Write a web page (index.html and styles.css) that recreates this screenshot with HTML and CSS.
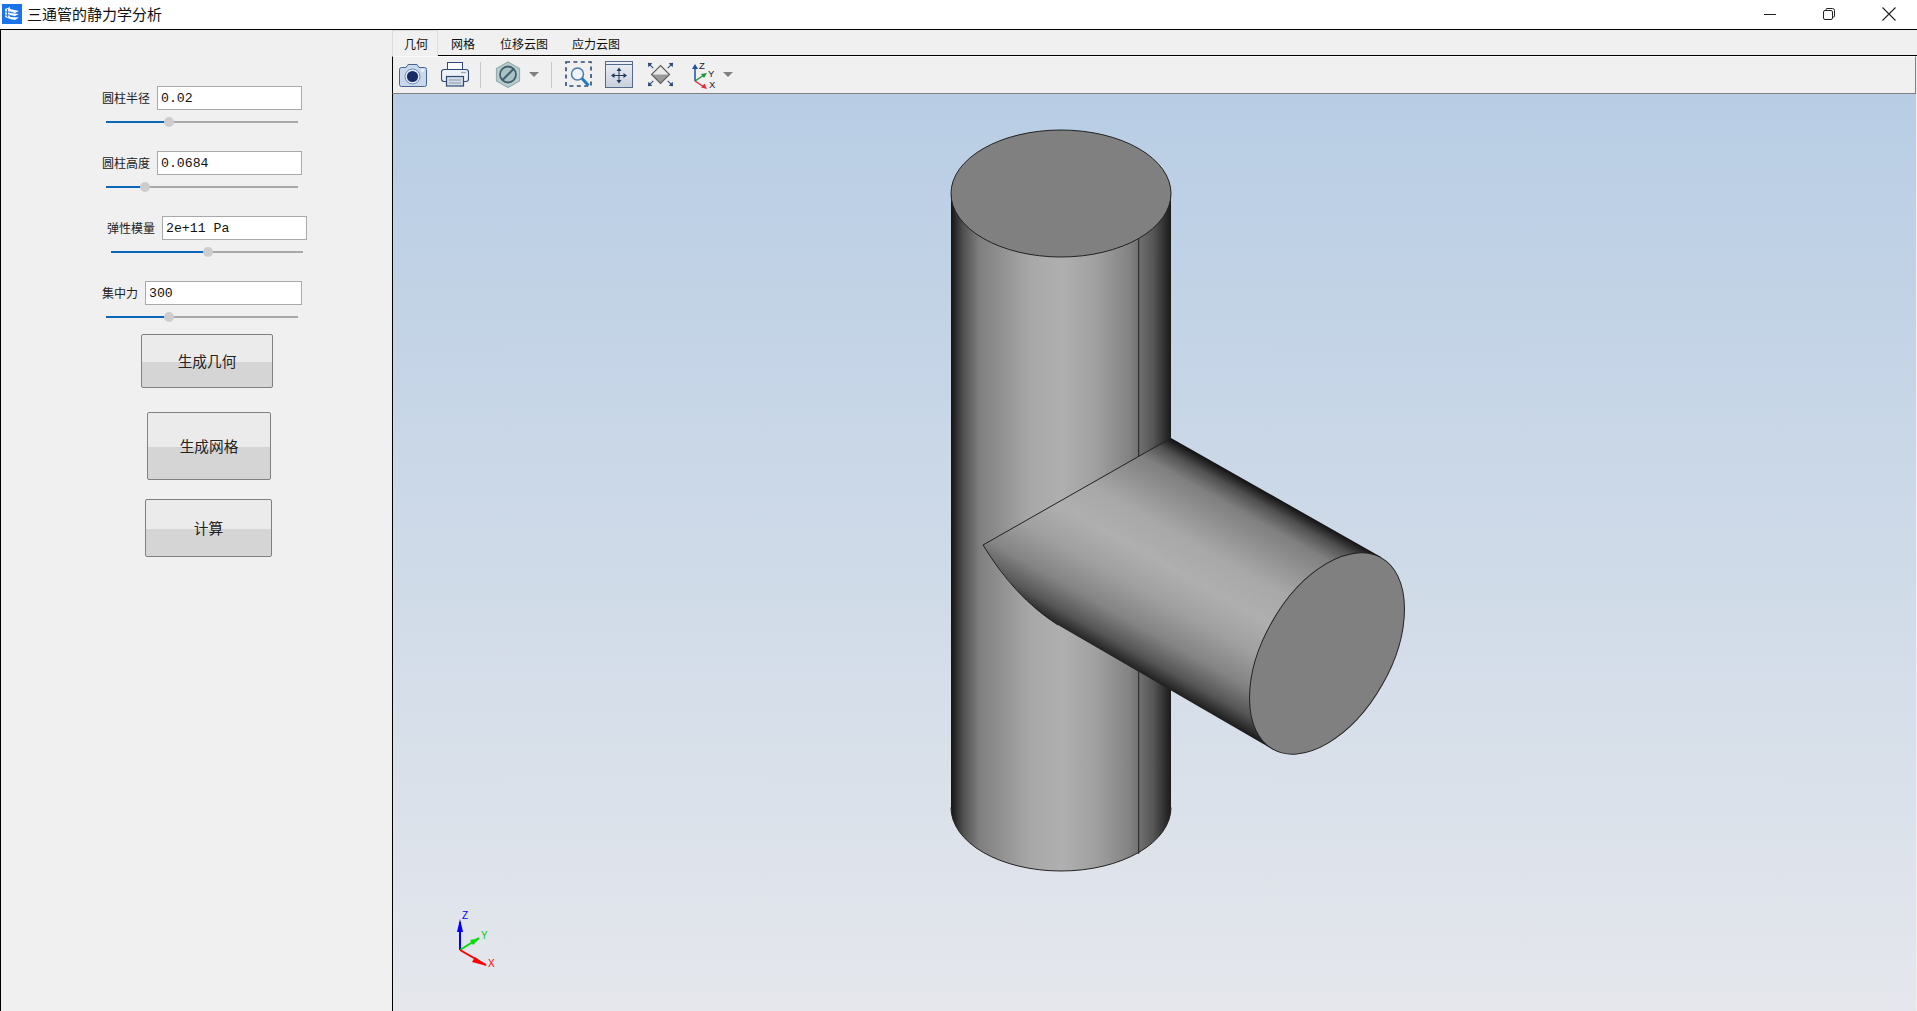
FILE: index.html
```html
<!DOCTYPE html>
<html lang="zh-CN">
<head>
<meta charset="utf-8">
<title>三通管的静力学分析</title>
<link rel="stylesheet" href="styles.css">
</head>
<body>
<div class="app">
  <header class="titlebar">
    <svg class="app-icon" viewBox="0 0 20 20" width="20" height="20">
      <rect width="20" height="20" fill="#1a73e8"/>
      <path d="M3 5 L8 3 V15 L3 13 Z" fill="#fff" opacity=".9"/>
      <path d="M8 5 L17 7 L13 9 L8 7.5 Z M8 9 L17 10 L13 12 L8 11 Z M8 13 L17 13.5 L13 16 L8 15 Z" fill="#fff"/>
      <path d="M3 8 H8 M3 11 H8 M5.5 5 V13" stroke="#1a73e8" stroke-width=".9"/>
    </svg>
    <span class="app-title">三通管的静力学分析</span>
    <div class="win-controls">
      <svg width="12" height="12" viewBox="0 0 12 12"><path d="M0 6.5H12" stroke="#222" stroke-width="1"/></svg>
      <svg width="12" height="12" viewBox="0 0 12 12"><path d="M3 2.5V1.5Q3 .5 4 .5H9.5Q11.5 .5 11.5 2.5V8Q11.5 9 10.5 9H9.5" fill="none" stroke="#222"/><rect x=".5" y="2.5" width="9" height="9" rx="1.5" fill="none" stroke="#222"/></svg>
      <svg width="14" height="14" viewBox="0 0 14 14"><path d="M.5 .5L13.5 13.5M13.5 .5L.5 13.5" stroke="#222" stroke-width="1.1"/></svg>
    </div>
  </header>

  <main class="workspace">
    <aside class="side">
      <section class="field field--a">
        <div class="field-row">
          <label class="field-label">圆柱半径</label>
          <input class="field-input field-input--145" value="0.02">
        </div>
        <div class="slider"><div class="slider-fill" style="width:33%"><span class="slider-thumb"></span></div></div>
      </section>
      <section class="field field--a">
        <div class="field-row">
          <label class="field-label">圆柱高度</label>
          <input class="field-input field-input--145" value="0.0684">
        </div>
        <div class="slider"><div class="slider-fill" style="width:20.5%"><span class="slider-thumb"></span></div></div>
      </section>
      <section class="field field--b">
        <div class="field-row">
          <label class="field-label">弹性模量</label>
          <input class="field-input field-input--145" value="2e+11 Pa">
        </div>
        <div class="slider"><div class="slider-fill" style="width:50.5%"><span class="slider-thumb"></span></div></div>
      </section>
      <section class="field field--a">
        <div class="field-row">
          <label class="field-label">集中力</label>
          <input class="field-input field-input--157" value="300">
        </div>
        <div class="slider"><div class="slider-fill" style="width:33%"><span class="slider-thumb"></span></div></div>
      </section>
      <button class="action action--geo">生成几何</button>
      <button class="action action--mesh">生成网格</button>
      <button class="action action--calc">计算</button>
    </aside>

    <div class="stage">
      <nav class="tabs">
        <span class="tab tab--active">几何</span>
        <span class="tab">网格</span>
        <span class="tab">位移云图</span>
        <span class="tab tab--last">应力云图</span>
      </nav>

      <div class="toolbar">
        <svg class="tool t-camera" width="28" height="24" viewBox="0 0 28 24">
          <path d="M2.5 4.5H7L9 1.5H18L20 4.5H25.5Q27.5 4.5 27.5 6.5V21.5Q27.5 23.5 25.5 23.5H2.5Q.5 23.5 .5 21.5V6.5Q.5 4.5 2.5 4.5Z" fill="#c9d8ec" stroke="#47648f"/>
          <circle cx="13.5" cy="13.5" r="7.5" fill="#e4ecf6" stroke="#6d8ab2"/>
          <circle cx="13.5" cy="13.5" r="5.6" fill="#1a2c66"/>
          <circle cx="23.5" cy="7.5" r="1.2" fill="#fff"/>
        </svg>
        <svg class="tool t-printer" width="28" height="25" viewBox="0 0 28 25">
          <rect x="6.5" y=".5" width="15" height="8" fill="#fff" stroke="#2f4a75"/>
          <rect x=".5" y="7.5" width="27" height="12" rx="2.5" fill="#eef2f7" stroke="#2f4a75" stroke-width="1.2"/>
          <path d="M20 10.5H25" stroke="#9aa9bf" stroke-width="1.4"/>
          <rect x="5.5" y="14.5" width="17" height="9.5" fill="#d3dbe6" stroke="#2f4a75" stroke-width="1.2"/>
          <path d="M8 18H20M8 21H20" stroke="#8b9bb2"/>
        </svg>
        <span class="tool-sep t-sep1"></span>
        <svg class="tool t-hex" width="26" height="27" viewBox="0 0 26 27">
          <path d="M13 1L24.5 7.5V20L13 26.5L1.5 20V7.5Z" fill="#b9cdcd" stroke="#93aeae" stroke-width="1.2"/>
          <circle cx="13" cy="13.5" r="8" fill="#a9c2c6" stroke="#41606c" stroke-width="1.8"/>
          <path d="M7.5 19L18.5 8" stroke="#41606c" stroke-width="2"/>
        </svg>
        <svg class="tool t-arrow1" width="10" height="5" viewBox="0 0 10 5"><path d="M0 0H10L5 5Z" fill="#808080"/></svg>
        <span class="tool-sep t-sep2"></span>
        <svg class="tool t-zoom" width="27" height="27" viewBox="0 0 27 27">
          <rect x="1" y="1" width="25" height="24" fill="none" stroke="#2f4a75" stroke-width="1.6" stroke-dasharray="4 3.4"/>
          <circle cx="12.5" cy="13" r="6" fill="#eef4fa" stroke="#4d7cab" stroke-width="1.5"/>
          <path d="M17 17.5L23.5 24.5" stroke="#1e7bc0" stroke-width="3"/>
        </svg>
        <svg class="tool t-fit" width="28" height="27" viewBox="0 0 28 27">
          <defs><linearGradient id="fitbg" x1="0" y1="0" x2="0" y2="1"><stop offset="0" stop-color="#eef1f5"/><stop offset="1" stop-color="#c8cfdb"/></linearGradient></defs>
          <rect x=".5" y=".5" width="27" height="26" fill="url(#fitbg)" stroke="#54698c"/>
          <path d="M1 3.5H27" stroke="#54698c" stroke-width="1"/>
          <path d="M14 8V21M7.5 14.5H20.5" stroke="#22395f" stroke-width="1"/>
          <path d="M14 6.5L11.5 10H16.5ZM14 22.5L11.5 19H16.5ZM6 14.5L9.5 12V17ZM22 14.5L18.5 12V17Z" fill="#22395f"/>
        </svg>
        <svg class="tool t-diamond" width="27" height="27" viewBox="0 0 30 28">
          <path d="M15 4L25 14H5Z" fill="#e9e9e9"/>
          <path d="M5 14H25L15 24Z" fill="#9a9a9a"/>
          <path d="M15 4L25 14L15 24L5 14Z" fill="none" stroke="#5f5f5f" stroke-width="1.3"/>
          <path d="M1 1L6 1.5L1.5 6Z M29 1L24 1.5L28.5 6Z M1 27L1.5 22L6 26.5Z M29 27L28.5 22L24 26.5Z" fill="#2d4a7a"/>
          <path d="M3 3L7 7M27 3L23 7M3 25L7 21M27 25L23 21" stroke="#2d4a7a" stroke-width="1.2"/>
        </svg>
        <svg class="tool t-axes" width="24" height="28" viewBox="0 0 24 28">
          <path d="M3 20V6" stroke="#1f4fa8" stroke-width="1.5"/>
          <path d="M3 3L0 8H6Z" fill="#1f4fa8"/>
          <path d="M3 20L12 14" stroke="#1c9a3a" stroke-width="1.5"/>
          <path d="M15 12L9 13L12 17Z" fill="#1c9a3a"/>
          <path d="M3 20L12 26" stroke="#e0303a" stroke-width="1.5"/>
          <path d="M15 28L9 26.5L12.5 22.5Z" fill="#e0303a"/>
          <text class="axes-label" x="7" y="8">Z</text>
          <text class="axes-label" x="16" y="16">Y</text>
          <text class="axes-label" x="17" y="27">X</text>
        </svg>
        <svg class="tool t-arrow2" width="10" height="5" viewBox="0 0 10 5"><path d="M0 0H10L5 5Z" fill="#808080"/></svg>
      </div>

      <div class="viewport">
        <svg class="scene" width="1523" height="917" viewBox="393 94 1523 917">
          <defs>
            <linearGradient id="tubeV" gradientUnits="userSpaceOnUse" x1="951" y1="0" x2="1171" y2="0">
              <stop offset="0" stop-color="#141414"/>
              <stop offset=".055" stop-color="#505050"/>
              <stop offset=".13" stop-color="#7f7f7f"/>
              <stop offset=".36" stop-color="#a8a8a8"/>
              <stop offset=".51" stop-color="#afafaf"/>
              <stop offset=".66" stop-color="#a0a0a0"/>
              <stop offset=".81" stop-color="#838383"/>
              <stop offset=".92" stop-color="#555"/>
              <stop offset="1" stop-color="#1a1a1a"/>
            </linearGradient>
            <linearGradient id="tubeB" gradientUnits="userSpaceOnUse" x1="1381" y1="557" x2="1273" y2="749.5">
              <stop offset="0" stop-color="#141414"/>
              <stop offset=".055" stop-color="#505050"/>
              <stop offset=".13" stop-color="#7f7f7f"/>
              <stop offset=".36" stop-color="#a8a8a8"/>
              <stop offset=".51" stop-color="#afafaf"/>
              <stop offset=".66" stop-color="#a0a0a0"/>
              <stop offset=".81" stop-color="#838383"/>
              <stop offset=".92" stop-color="#555"/>
              <stop offset="1" stop-color="#1a1a1a"/>
            </linearGradient>
          </defs>
          <path d="M951 193.5V807.5A110 63.5 0 0 0 1171 807.5V193.5Z" fill="url(#tubeV)"/>
          <path d="M951 807.5A110 63.5 0 0 0 1171 807.5" fill="none" stroke="#222"/>
          <path d="M1138.7 238V854" stroke="#222" stroke-width="1"/>
          <ellipse cx="1061" cy="193.5" rx="110" ry="63.5" fill="#808080" stroke="#222"/>
          <path d="M983 545L1171 438L1381 557L1273 749.5L1058 625C1028 606 1003 578 983 545Z" fill="url(#tubeB)"/>
          <path d="M1058 625C1028 606 1003 578 983 545L1171 438" fill="none" stroke="#222"/>
          <ellipse cx="1327" cy="653.5" rx="110" ry="63.5" transform="rotate(-60.4 1327 653.5)" fill="#808080" stroke="#222"/>
          <g class="triad">
            <path d="M460 950V922" stroke="#00f" stroke-width="2"/>
            <path d="M460 919L457 932H463Z" fill="#00f"/>
            <path d="M460 950L479 938" stroke="#0d0" stroke-width="2"/>
            <path d="M480 938L470 940L473 945Z" fill="#0d0"/>
            <path d="M460 950L486 965" stroke="#f00" stroke-width="2"/>
            <path d="M487 966L475 957L472 962Z" fill="#f00"/>
            <text class="triad-label triad-z" x="462" y="919">Z</text>
            <text class="triad-label triad-y" x="481" y="939">Y</text>
            <text class="triad-label triad-x" x="488" y="967">X</text>
          </g>
        </svg>
      </div>
    </div>
  </main>
</div>
</body>
</html>
```

FILE: styles.css
```css
* { box-sizing: border-box; }
html, body { margin: 0; height: 100%; overflow: hidden; }
body {
  background: #f0f0f0;
  color: #1e1e1e;
  font-family: "Noto Sans CJK SC", "Liberation Sans", sans-serif;
}
.app { display: flex; flex-direction: column; height: 1011px; }

.titlebar {
  display: flex;
  align-items: center;
  flex: 0 0 30px;
  background: #fff;
  border-bottom: 1px solid #000;
  padding: 0 21px 1px 2px;
}
.app-icon { display: block; }
.app-title { margin-left: 5px; font-size: 15px; line-height: 20px; color: #111; }
.win-controls { display: flex; align-items: center; gap: 47px; margin-left: auto; }
.win-controls svg { display: block; }

.workspace { display: flex; flex: 1; min-height: 0; }

.side {
  flex: 0 0 392px;
  border-left: 1px solid #000;
  padding-top: 56px;
  background: #f0f0f0;
}
.field + .field { margin-top: 28px; }
.field--a { margin-left: 101px; }
.field--b { margin-left: 106px; }
.field-row { display: flex; align-items: center; gap: 7px; height: 24px; }
.field-label { font-size: 12px; line-height: 24px; color: #222; white-space: nowrap; }
.field-input {
  height: 24px;
  border: 1px solid #a9a9a9;
  border-radius: 0;
  background: #fff;
  padding: 1px 0 0 3px;
  outline: none;
  color: #111;
  font-family: "Liberation Mono", monospace;
  font-size: 13.2px;
}
.field-input--145 { width: 145px; }
.field-input--157 { width: 157px; }

.slider {
  width: 192px;
  height: 2px;
  margin: 11px 0 0 4px;
  background: #a9a9a9;
}
.slider-fill { position: relative; height: 2px; background: #0a66b8; }
.slider-thumb {
  position: absolute;
  right: -5px;
  top: -4px;
  width: 10px;
  height: 10px;
  border-radius: 50%;
  background: #cdcdcd;
}

.action {
  display: block;
  padding: 0 0 2px;
  border: 1px solid #808080;
  border-radius: 2px;
  background: linear-gradient(#ebebeb 0 52%, #d5d5d5 52% 100%);
  color: #222;
  font-family: inherit;
  font-size: 14.67px;
}
.action--geo { width: 132px; height: 54px; margin: 16px 0 0 140px; }
.action--mesh { width: 124px; height: 68px; margin: 24px 0 0 146px; }
.action--calc { width: 127px; height: 58px; margin: 19px 0 0 144px; }

.stage { display: flex; flex-direction: column; flex: 1; min-width: 0; padding-right: 1px; }

.tabs {
  display: flex;
  flex: none;
  height: 26px;
  margin-right: -1px;
  border-bottom: 1px solid #000;
  font-size: 12px;
  line-height: 27px;
  color: #111;
}
.tab { height: 25px; margin-left: 1px; padding: 0 12px; }
.tab--active {
  height: 26px;
  margin-left: 0;
  padding: 0 9px 0 11px;
  border: 1px solid #dcdcdc;
  border-bottom: none;
  background: #f0f0f0;
  line-height: 25px;
}
.tab--last { margin-left: 0; }

.toolbar {
  display: flex;
  align-items: center;
  flex: 0 0 38px;
  padding-bottom: 1px;
  border-left: 1px solid #000;
  border-right: 1px solid #808080;
  border-top: 1px solid #fbfbfb;
  border-bottom: 1px solid #808080;
  background: #f0f0f0;
}
.tool { display: block; flex: none; }
.tool-sep { flex: none; width: 1px; height: 26px; background: #c9c9c9; }
.t-camera { margin-left: 6px; }
.t-printer { margin-left: 14px; }
.t-sep1 { margin-left: 11px; }
.t-hex { margin-left: 14px; }
.t-arrow1 { margin-left: 8px; }
.t-sep2 { margin-left: 12px; }
.t-zoom { margin-left: 13px; }
.t-fit { margin-left: 13px; }
.t-diamond { margin-left: 14px; }
.t-axes { margin-left: 18px; }
.t-arrow2 { margin-left: 7px; }
.axes-label { font-family: "Liberation Sans", sans-serif; font-size: 9.5px; fill: #222; }

.viewport {
  flex: 1;
  min-height: 0;
  overflow: hidden;
  border-left: 1px solid #000;
  background: linear-gradient(#b8cde4, #e5e7ec);
}
.scene { display: block; }
.triad-label { font-family: "Liberation Sans", sans-serif; font-size: 10px; }
.triad-z { fill: #00f; }
.triad-y { fill: #0c0; }
.triad-x { fill: #f00; }
```
